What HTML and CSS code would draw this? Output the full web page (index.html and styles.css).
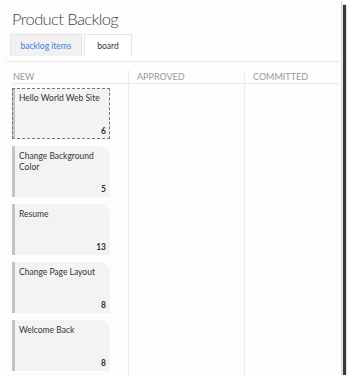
FILE: index.html
```html
<!DOCTYPE html>
<html lang="en">
<head>
    <meta charset="UTF-8">
    <title>Product Backlog</title>
    <link rel="stylesheet" href="styles.css">
</head>
<body>
    <div class="frame">
        <h1 class="title">Product Backlog</h1>

        <div class="tabs">
            <a class="tab">backlog items</a>
            <a class="tab active">board</a>
        </div>
        <div class="rule"></div>

        <div class="board">
            <div class="column first">
                <div class="col-head">NEW</div>
                <div class="cards">
                    <div class="card selected">
                        <div class="card-title">Hello World Web Site</div>
                        <div class="card-effort">6</div>
                    </div>
                    <div class="card">
                        <div class="card-title">Change Background Color</div>
                        <div class="card-effort">5</div>
                    </div>
                    <div class="card">
                        <div class="card-title">Resume</div>
                        <div class="card-effort">13</div>
                    </div>
                    <div class="card">
                        <div class="card-title">Change Page Layout</div>
                        <div class="card-effort">8</div>
                    </div>
                    <div class="card">
                        <div class="card-title">Welcome Back</div>
                        <div class="card-effort">8</div>
                    </div>
                </div>
            </div>
            <div class="column">
                <div class="col-head">APPROVED</div>
            </div>
            <div class="column last">
                <div class="col-head">COMMITTED</div>
            </div>
        </div>
    </div>
</body>
</html>
```

FILE: styles.css
```css
body {
    margin: 0;
    background: #fff;
    font-family: 'Lato', 'Open Sans', sans-serif;
}

.frame {
    width: 341px;
    height: 375px;
    background: #fdfdfd;
    box-shadow: 1px 1px 0 #d8d8d8, 2px 2px 0 #e6e6e6, 5px 5px 1px #3a3a3a;
    overflow: hidden;
}

.title {
    margin: 0;
    padding: 9px 0 0 12px;
    height: 25px;
    font-size: 16.5px;
    font-weight: 300;
    letter-spacing: -0.6px;
    color: #444;
}

.tabs {
    display: flex;
    gap: 2px;
    padding-left: 10px;
}

.tab {
    width: 70px;
    height: 21px;
    line-height: 22px;
    text-align: center;
    font-size: 8.5px;
    border: 1px solid #e4e4e4;
    border-bottom: none;
    background: #f1f1f1;
    color: #3c7fd8;
}

.tab.active {
    width: 46px;
    background: #fff;
    color: #333;
}

.rule {
    margin: 5px 1px 0 6px;
    border-top: 1px solid #e8e8e8;
}

.board {
    display: grid;
    grid-template-columns: 116px 116px 96px;
    margin: 8px 0 0 12px;
    height: 305px;
}

.column {
    border-left: 1px solid #ececec;
    padding-left: 8px;
}

.column.first {
    border-left: none;
    padding-left: 0;
}

.col-head {
    height: 12px;
    padding-top: 1px;
    border-bottom: 1px solid #e8e8e8;
    margin-left: -8px;
    padding-left: 8px;
    font-size: 9px;
    line-height: 11px;
    color: #999;
}

.column.first .col-head {
    margin-left: 0;
    padding-left: 1px;
}

.cards {
    display: flex;
    flex-direction: column;
    gap: 7px;
    padding-top: 4px;
}

.card {
    width: 98px;
    height: 51px;
    box-sizing: border-box;
    display: flex;
    flex-direction: column;
    justify-content: space-between;
    padding: 5px 4px 2px 4px;
    background: #f3f3f3;
    border-left: 3px solid #c4c4c4;
    clip-path: polygon(0 0, 91px 0, 98px 7px, 98px 100%, 0 100%);
    font-size: 8.5px;
    color: #333;
}

.card.selected {
    clip-path: none;
    outline: 1px dashed #777;
    outline-offset: -1px;
}

.card-title {
    line-height: 11px;
    padding-right: 2px;
}

.card-effort {
    text-align: right;
    font-weight: bold;
    line-height: 11px;
}
```
